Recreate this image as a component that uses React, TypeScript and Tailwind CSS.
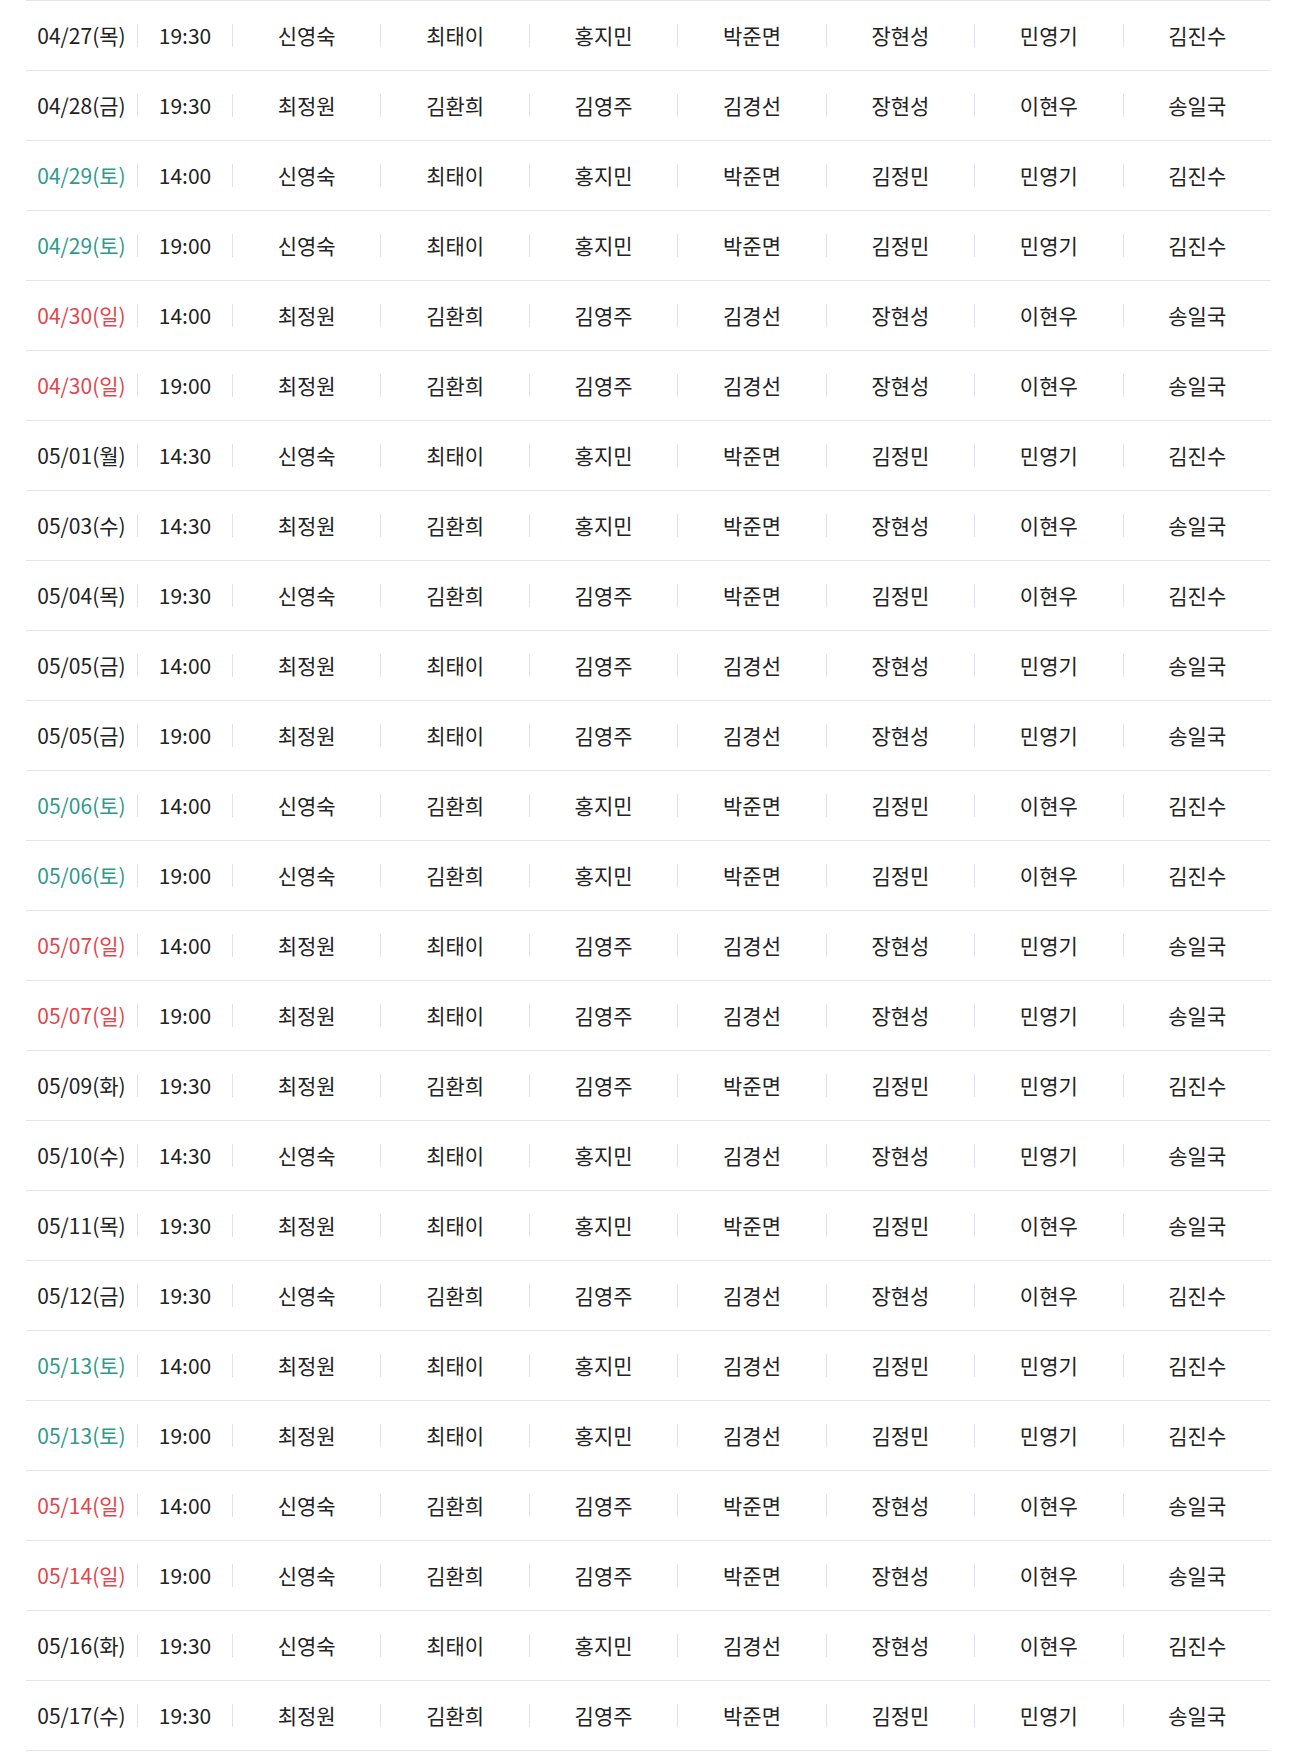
import React from "react";

type Row = {
  date: string;
  day: string;
  time: string;
  cast: string[];
};

const rows: Row[] = [
  { date: "04/27", day: "목", time: "19:30", cast: ["신영숙", "최태이", "홍지민", "박준면", "장현성", "민영기", "김진수"] },
  { date: "04/28", day: "금", time: "19:30", cast: ["최정원", "김환희", "김영주", "김경선", "장현성", "이현우", "송일국"] },
  { date: "04/29", day: "토", time: "14:00", cast: ["신영숙", "최태이", "홍지민", "박준면", "김정민", "민영기", "김진수"] },
  { date: "04/29", day: "토", time: "19:00", cast: ["신영숙", "최태이", "홍지민", "박준면", "김정민", "민영기", "김진수"] },
  { date: "04/30", day: "일", time: "14:00", cast: ["최정원", "김환희", "김영주", "김경선", "장현성", "이현우", "송일국"] },
  { date: "04/30", day: "일", time: "19:00", cast: ["최정원", "김환희", "김영주", "김경선", "장현성", "이현우", "송일국"] },
  { date: "05/01", day: "월", time: "14:30", cast: ["신영숙", "최태이", "홍지민", "박준면", "김정민", "민영기", "김진수"] },
  { date: "05/03", day: "수", time: "14:30", cast: ["최정원", "김환희", "홍지민", "박준면", "장현성", "이현우", "송일국"] },
  { date: "05/04", day: "목", time: "19:30", cast: ["신영숙", "김환희", "김영주", "박준면", "김정민", "이현우", "김진수"] },
  { date: "05/05", day: "금", time: "14:00", cast: ["최정원", "최태이", "김영주", "김경선", "장현성", "민영기", "송일국"] },
  { date: "05/05", day: "금", time: "19:00", cast: ["최정원", "최태이", "김영주", "김경선", "장현성", "민영기", "송일국"] },
  { date: "05/06", day: "토", time: "14:00", cast: ["신영숙", "김환희", "홍지민", "박준면", "김정민", "이현우", "김진수"] },
  { date: "05/06", day: "토", time: "19:00", cast: ["신영숙", "김환희", "홍지민", "박준면", "김정민", "이현우", "김진수"] },
  { date: "05/07", day: "일", time: "14:00", cast: ["최정원", "최태이", "김영주", "김경선", "장현성", "민영기", "송일국"] },
  { date: "05/07", day: "일", time: "19:00", cast: ["최정원", "최태이", "김영주", "김경선", "장현성", "민영기", "송일국"] },
  { date: "05/09", day: "화", time: "19:30", cast: ["최정원", "김환희", "김영주", "박준면", "김정민", "민영기", "김진수"] },
  { date: "05/10", day: "수", time: "14:30", cast: ["신영숙", "최태이", "홍지민", "김경선", "장현성", "민영기", "송일국"] },
  { date: "05/11", day: "목", time: "19:30", cast: ["최정원", "최태이", "홍지민", "박준면", "김정민", "이현우", "송일국"] },
  { date: "05/12", day: "금", time: "19:30", cast: ["신영숙", "김환희", "김영주", "김경선", "장현성", "이현우", "김진수"] },
  { date: "05/13", day: "토", time: "14:00", cast: ["최정원", "최태이", "홍지민", "김경선", "김정민", "민영기", "김진수"] },
  { date: "05/13", day: "토", time: "19:00", cast: ["최정원", "최태이", "홍지민", "김경선", "김정민", "민영기", "김진수"] },
  { date: "05/14", day: "일", time: "14:00", cast: ["신영숙", "김환희", "김영주", "박준면", "장현성", "이현우", "송일국"] },
  { date: "05/14", day: "일", time: "19:00", cast: ["신영숙", "김환희", "김영주", "박준면", "장현성", "이현우", "송일국"] },
  { date: "05/16", day: "화", time: "19:30", cast: ["신영숙", "최태이", "홍지민", "김경선", "장현성", "이현우", "김진수"] },
  { date: "05/17", day: "수", time: "19:30", cast: ["최정원", "김환희", "김영주", "박준면", "김정민", "민영기", "송일국"] },
];

const dateColor = (day: string) => {
  if (day === "토") return "text-[#2f9a8b]";
  if (day === "일") return "text-[#e1464d]";
  return "text-[#222222]";
};

const Cell = ({ children }: { children: React.ReactNode }) => (
  <div className="flex items-center justify-center h-[23px] border-l border-[#dde3ea]">
    {children}
  </div>
);

const ScheduleRow = ({ row }: { row: Row }) => (
  <div className="grid grid-cols-[111px_95px_repeat(7,1fr)] items-center h-[70px] border-t border-[#e3e7eb]">
    <div className={`flex items-center justify-center h-[23px] ${dateColor(row.day)}`}>
      {row.date}({row.day})
    </div>
    <Cell>{row.time}</Cell>
    {row.cast.map((name, i) => (
      <Cell key={i}>{name}</Cell>
    ))}
  </div>
);

export default function App() {
  return (
    <div
      className="bg-white min-h-screen pl-[26px] pr-[22px] text-[21px] text-[#222222]"
      style={{ fontFamily: '"Noto Sans CJK KR", "Noto Sans", sans-serif' }}
    >
      <div className="border-b border-[#e3e7eb]">
        {rows.map((row, i) => (
          <ScheduleRow key={i} row={row} />
        ))}
      </div>
    </div>
  );
}
